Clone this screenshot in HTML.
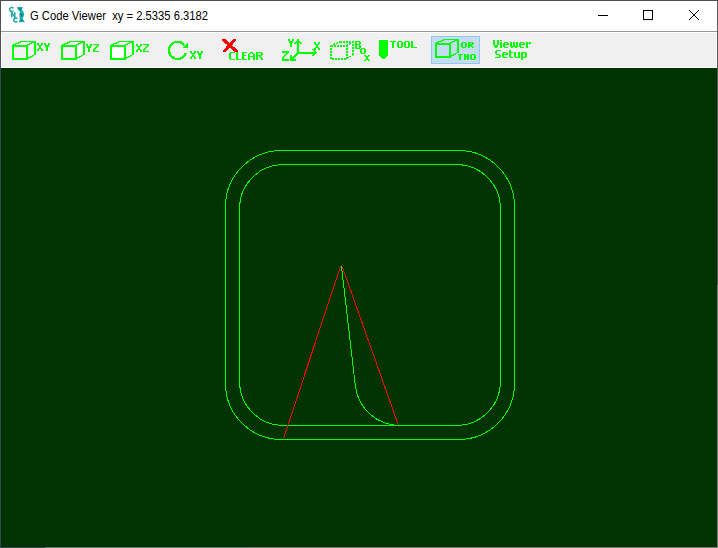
<!DOCTYPE html>
<html><head><meta charset="utf-8">
<style>
html,body{margin:0;padding:0;width:718px;height:548px;overflow:hidden;background:#fff;}
body{position:relative;font-family:"Liberation Sans",sans-serif;}
.abs{position:absolute;}
#title{left:1px;top:1px;width:716px;height:30px;background:#fff;}
#titleline{left:1px;top:31px;width:716px;height:1px;background:#999;}
#toolbar{left:1px;top:32px;width:716px;height:36px;background:#fff;}
#toolbg{left:2px;top:33px;width:714px;height:34px;background:#f0f0f0;}
#canvas{left:1px;top:68px;width:716px;height:479px;background:#003300;}
#ttext{left:30px;top:9px;font-size:12px;line-height:14px;color:#000;white-space:pre;transform:scaleX(0.936);transform-origin:0 0;}
svg{position:absolute;left:0;top:0;}
</style></head><body>
<div class="abs" id="title"></div>
<div class="abs" id="titleline"></div>
<div class="abs" id="toolbar"></div>
<div class="abs" id="toolbg"></div>
<div class="abs" id="canvas"></div>
<div class="abs" id="ttext">G Code Viewer  xy = 2.5335 6.3182</div>
<svg width="718" height="548" viewBox="0 0 718 548" shape-rendering="crispEdges">
  <!-- app icon -->
  <g shape-rendering="geometricPrecision" fill="none" stroke="#1fa5a5" stroke-width="1.5">
    <path d="M13.3 8.2 A2 2.1 0 1 0 13.3 10.8"/>
    <path d="M11.6 17.4 V12.4 L14.8 17.2 V12.2"/>
    <path d="M17.3 18.8 A2 2 0 1 0 17.3 21.2"/>
  </g>
  <g shape-rendering="geometricPrecision">
    <path d="M17 7 L22.8 7 L21.8 9.3 L23.2 11.3 L24.2 14 L23.6 16.6 L22.6 18.6 L25 22.2 L18.5 22.2 L19.8 19.6 L19.4 17 L19.4 14 L19.9 12 L17.4 9 Z" fill="#1fb4b4"/>
    <path d="M18 8 L22 7.8 L20.6 10.6 Z M20.2 12.5 L23.2 14.2 L22.2 17.6 L20.2 15.5 Z M19.8 20.5 L23.5 21.6 L21.6 19 Z" fill="#0f8888"/>
  </g>
  <!-- window controls -->
  <rect x="598" y="15" width="10" height="1" fill="#000"/>
  <rect x="643.5" y="10.5" width="9" height="9" fill="none" stroke="#000" stroke-width="1"/>
  <path d="M689 10 L699 20 M699 10 L689 20" stroke="#000" stroke-width="1" shape-rendering="geometricPrecision"/>
  <!-- drawing -->
  <g fill="none" stroke="#00ff00" stroke-width="1">
    <path d="M281.5 150.5 H458.5 A56 56 0 0 1 514.5 206.5 V383.5 A56 56 0 0 1 458.5 439.5 H281.5 A56 56 0 0 1 225.5 383.5 V206.5 A56 56 0 0 1 281.5 150.5 Z"/>
    <path d="M283.5 164.5 H456.5 A44 44 0 0 1 500.5 208.5 V381.5 A44 44 0 0 1 456.5 425.5 H283.5 A44 44 0 0 1 239.5 381.5 V208.5 A44 44 0 0 1 283.5 164.5 Z"/>
    <path d="M341.5 266.5 L355.3 385.6 A45 45 0 0 0 400 425.5"/>
  </g>
  <g fill="none" stroke="#ff0000" stroke-width="1">
    <path d="M340.5 266.5 L283.5 438.5"/>
    <path d="M342.5 267.5 L398.5 425.5"/>
  </g>
</svg>






<!--TB--><svg id="tb" width="718" height="548" viewBox="0 0 718 548" shape-rendering="crispEdges"><rect x="431.5" y="36.5" width="48" height="27" fill="#c4dcf2" stroke="#90c8f6"/><polygon points="13,46 22,42 35,42 27,46" fill="#fff"/><g fill="none" stroke="#00ff00" stroke-width="2"><rect x="13" y="46" width="14" height="13"/><line x1="35" y1="41" x2="35" y2="55"/></g><g fill="none" stroke="#00ff00" stroke-width="1.3"><line x1="21" y1="41.6" x2="35" y2="41.6"/><line x1="12.5" y1="45.5" x2="21.5" y2="41.5"/><line x1="26.5" y1="45.5" x2="34.5" y2="41.8"/><line x1="27" y1="58.8" x2="35" y2="54.5"/></g><polygon points="76,46 84,42 84,55 76,59" fill="#fff"/><g fill="none" stroke="#00ff00" stroke-width="2"><rect x="62" y="46" width="14" height="13"/><line x1="84" y1="41" x2="84" y2="55"/></g><g fill="none" stroke="#00ff00" stroke-width="1.3"><line x1="70" y1="41.6" x2="84" y2="41.6"/><line x1="61.5" y1="45.5" x2="70.5" y2="41.5"/><line x1="75.5" y1="45.5" x2="83.5" y2="41.8"/><line x1="76" y1="58.8" x2="84" y2="54.5"/></g><rect x="111" y="46" width="14" height="13" fill="#fff"/><g fill="none" stroke="#00ff00" stroke-width="2"><rect x="111" y="46" width="14" height="13"/><line x1="133" y1="41" x2="133" y2="55"/></g><g fill="none" stroke="#00ff00" stroke-width="1.3"><line x1="119" y1="41.6" x2="133" y2="41.6"/><line x1="110.5" y1="45.5" x2="119.5" y2="41.5"/><line x1="124.5" y1="45.5" x2="132.5" y2="41.8"/><line x1="125" y1="58.8" x2="133" y2="54.5"/></g><g fill="none" stroke="#00ff00" stroke-width="2"><rect x="436" y="44" width="14" height="13"/><line x1="458" y1="39" x2="458" y2="53"/></g><g fill="none" stroke="#00ff00" stroke-width="1.3"><line x1="444" y1="39.6" x2="458" y2="39.6"/><line x1="435.5" y1="43.5" x2="444.5" y2="39.5"/><line x1="449.5" y1="43.5" x2="457.5" y2="39.8"/><line x1="450" y1="56.8" x2="458" y2="52.5"/></g><g fill="none" stroke="#00ff00" stroke-width="2" stroke-dasharray="2 1"><rect x="331" y="46" width="16" height="13"/><polyline points="340,42 353,42 353,55"/></g><g fill="none" stroke="#00ff00" stroke-width="1.25" stroke-dasharray="2 1"><line x1="330.5" y1="45.8" x2="340" y2="41.8"/><line x1="346.5" y1="45.8" x2="352.5" y2="41.8"/><line x1="347" y1="58.8" x2="353" y2="54.5"/></g><path d="M184.6 45.3 A8.6 8.6 0 1 0 185.8 53" fill="none" stroke="#00ff00" stroke-width="2.2"/><polygon points="182,48 188,48 188,42" fill="#00ff00"/><g fill="#ff0000"><polygon points="222,39 225,39 238,50.5 238,52 235,52 222,40.5"/><polygon points="233,39 236,39 236,40.5 226,52 223,52 223,50.5"/></g><g fill="none" stroke="#00ff00" stroke-width="2"><line x1="298" y1="40" x2="298" y2="54"/></g><g fill="none" stroke="#00ff00" stroke-width="1.4"><polyline points="294.5,44 298,40 301.5,44"/><line x1="297" y1="53" x2="316" y2="53"/><polyline points="312,49 316,52.5 312,56"/></g><g fill="none" stroke="#00ff00" stroke-width="2"><line x1="298" y1="53" x2="291" y2="60"/><polyline points="291,55 291,60 296,60"/></g><polygon points="378,39 389,39 389,56 385.3,60.4 381.7,60.4 378,56" fill="#fff"/><polygon points="379,40 388,40 388,55.5 384.8,59.3 382.2,59.3 379,55.5" fill="#00ff00"/><g fill="#00ff00"><rect x="37" y="43" width="2" height="2"/><rect x="37" y="49" width="2" height="2"/><rect x="38" y="45" width="4" height="1"/><rect x="38" y="48" width="4" height="1"/><rect x="39" y="46" width="2" height="2"/><rect x="41" y="43" width="2" height="2"/><rect x="41" y="49" width="2" height="2"/><rect x="44" y="43" width="2" height="2"/><rect x="45" y="45" width="4" height="2"/><rect x="46" y="47" width="2" height="4"/><rect x="48" y="43" width="2" height="2"/><rect x="86" y="44" width="2" height="2"/><rect x="87" y="46" width="4" height="2"/><rect x="88" y="48" width="2" height="4"/><rect x="90" y="44" width="2" height="2"/><rect x="93" y="49" width="2" height="2"/><rect x="93" y="44" width="6" height="1"/><rect x="93" y="51" width="6" height="1"/><rect x="94" y="48" width="2" height="1"/><rect x="95" y="47" width="2" height="1"/><rect x="96" y="46" width="2" height="1"/><rect x="97" y="45" width="2" height="1"/><rect x="136" y="44" width="2" height="2"/><rect x="136" y="50" width="2" height="2"/><rect x="137" y="46" width="4" height="1"/><rect x="137" y="49" width="4" height="1"/><rect x="138" y="47" width="2" height="2"/><rect x="140" y="44" width="2" height="2"/><rect x="140" y="50" width="2" height="2"/><rect x="143" y="49" width="2" height="2"/><rect x="143" y="44" width="6" height="1"/><rect x="143" y="51" width="6" height="1"/><rect x="144" y="48" width="2" height="1"/><rect x="145" y="47" width="2" height="1"/><rect x="146" y="46" width="2" height="1"/><rect x="147" y="45" width="2" height="1"/><rect x="190" y="51" width="2" height="2"/><rect x="190" y="57" width="2" height="2"/><rect x="191" y="53" width="4" height="1"/><rect x="191" y="56" width="4" height="1"/><rect x="192" y="54" width="2" height="2"/><rect x="194" y="51" width="2" height="2"/><rect x="194" y="57" width="2" height="2"/><rect x="197" y="51" width="2" height="2"/><rect x="198" y="53" width="4" height="2"/><rect x="199" y="55" width="2" height="4"/><rect x="201" y="51" width="2" height="2"/><rect x="229" y="53" width="2" height="6"/><rect x="230" y="52" width="5" height="1"/><rect x="230" y="59" width="5" height="1"/><rect x="236" y="52" width="2" height="7"/><rect x="236" y="59" width="5" height="1"/><rect x="242" y="53" width="2" height="2"/><rect x="242" y="56" width="2" height="3"/><rect x="242" y="55" width="4" height="1"/><rect x="242" y="52" width="5" height="1"/><rect x="242" y="59" width="5" height="1"/><rect x="248" y="54" width="2" height="2"/><rect x="248" y="57" width="2" height="3"/><rect x="248" y="56" width="7" height="1"/><rect x="249" y="53" width="2" height="1"/><rect x="250" y="52" width="3" height="1"/><rect x="252" y="53" width="2" height="1"/><rect x="253" y="54" width="2" height="2"/><rect x="253" y="57" width="2" height="3"/><rect x="256" y="53" width="2" height="2"/><rect x="256" y="56" width="2" height="4"/><rect x="256" y="52" width="6" height="1"/><rect x="256" y="55" width="6" height="1"/><rect x="259" y="56" width="2" height="1"/><rect x="260" y="57" width="2" height="1"/><rect x="261" y="53" width="2" height="2"/><rect x="261" y="58" width="2" height="2"/><rect x="288" y="39" width="2" height="2"/><rect x="289" y="41" width="4" height="2"/><rect x="290" y="43" width="2" height="4"/><rect x="292" y="39" width="2" height="2"/><rect x="314" y="42" width="2" height="2"/><rect x="314" y="48" width="2" height="2"/><rect x="315" y="44" width="4" height="1"/><rect x="315" y="47" width="4" height="1"/><rect x="316" y="45" width="2" height="2"/><rect x="318" y="42" width="2" height="2"/><rect x="318" y="48" width="2" height="2"/><rect x="282" y="57" width="2" height="2"/><rect x="282" y="51" width="7" height="2"/><rect x="282" y="59" width="7" height="2"/><rect x="283" y="56" width="2" height="1"/><rect x="284" y="55" width="2" height="1"/><rect x="285" y="54" width="2" height="1"/><rect x="286" y="53" width="2" height="1"/><rect x="355" y="42" width="2" height="2"/><rect x="355" y="45" width="2" height="3"/><rect x="355" y="41" width="5" height="1"/><rect x="355" y="44" width="5" height="1"/><rect x="355" y="48" width="5" height="1"/><rect x="359" y="42" width="2" height="2"/><rect x="359" y="45" width="2" height="3"/><rect x="360" y="49" width="2" height="4"/><rect x="361" y="48" width="4" height="1"/><rect x="361" y="53" width="4" height="1"/><rect x="364" y="49" width="2" height="4"/><rect x="364" y="55" width="2" height="1"/><rect x="364" y="60" width="2" height="1"/><rect x="365" y="56" width="4" height="1"/><rect x="365" y="59" width="4" height="1"/><rect x="366" y="57" width="2" height="2"/><rect x="368" y="55" width="2" height="1"/><rect x="368" y="60" width="2" height="1"/><rect x="390" y="41" width="6" height="1"/><rect x="392" y="42" width="2" height="6"/><rect x="397" y="42" width="2" height="5"/><rect x="398" y="41" width="4" height="1"/><rect x="398" y="47" width="4" height="1"/><rect x="401" y="42" width="2" height="5"/><rect x="404" y="42" width="2" height="5"/><rect x="405" y="41" width="4" height="1"/><rect x="405" y="47" width="4" height="1"/><rect x="408" y="42" width="2" height="5"/><rect x="411" y="41" width="2" height="6"/><rect x="411" y="47" width="6" height="1"/><rect x="461" y="43" width="2" height="4"/><rect x="462" y="42" width="4" height="1"/><rect x="462" y="47" width="4" height="1"/><rect x="465" y="43" width="2" height="4"/><rect x="468" y="43" width="2" height="1"/><rect x="468" y="46" width="2" height="2"/><rect x="468" y="45" width="4" height="1"/><rect x="468" y="42" width="5" height="1"/><rect x="468" y="44" width="5" height="1"/><rect x="471" y="46" width="2" height="1"/><rect x="472" y="43" width="2" height="1"/><rect x="472" y="47" width="2" height="1"/><rect x="458" y="54" width="5" height="1"/><rect x="459" y="55" width="2" height="5"/><rect x="464" y="54" width="2" height="2"/><rect x="464" y="57" width="2" height="3"/><rect x="464" y="56" width="5" height="1"/><rect x="467" y="54" width="2" height="2"/><rect x="467" y="57" width="2" height="3"/><rect x="470" y="55" width="2" height="4"/><rect x="471" y="54" width="4" height="1"/><rect x="471" y="59" width="4" height="1"/><rect x="474" y="55" width="2" height="4"/><rect x="493" y="40" width="2" height="5"/><rect x="494" y="45" width="4" height="2"/><rect x="495" y="47" width="2" height="1"/><rect x="497" y="40" width="2" height="5"/><rect x="500" y="40" width="2" height="1"/><rect x="500" y="42" width="2" height="6"/><rect x="503" y="43" width="2" height="1"/><rect x="503" y="45" width="2" height="2"/><rect x="503" y="44" width="6" height="1"/><rect x="504" y="42" width="4" height="1"/><rect x="504" y="47" width="4" height="1"/><rect x="507" y="43" width="2" height="1"/><rect x="510" y="42" width="2" height="4"/><rect x="510" y="46" width="8" height="1"/><rect x="511" y="47" width="2" height="1"/><rect x="513" y="42" width="2" height="4"/><rect x="515" y="47" width="2" height="1"/><rect x="516" y="42" width="2" height="4"/><rect x="519" y="43" width="2" height="1"/><rect x="519" y="45" width="2" height="2"/><rect x="519" y="44" width="6" height="1"/><rect x="520" y="42" width="4" height="1"/><rect x="520" y="47" width="4" height="1"/><rect x="523" y="43" width="2" height="1"/><rect x="526" y="42" width="2" height="1"/><rect x="526" y="44" width="2" height="4"/><rect x="526" y="43" width="5" height="1"/><rect x="529" y="42" width="2" height="1"/><rect x="495" y="51" width="2" height="3"/><rect x="495" y="57" width="5" height="1"/><rect x="496" y="54" width="4" height="1"/><rect x="496" y="50" width="5" height="1"/><rect x="499" y="55" width="2" height="2"/><rect x="502" y="53" width="2" height="1"/><rect x="502" y="55" width="2" height="2"/><rect x="502" y="54" width="6" height="1"/><rect x="503" y="52" width="4" height="1"/><rect x="503" y="57" width="4" height="1"/><rect x="506" y="53" width="2" height="1"/><rect x="509" y="50" width="2" height="2"/><rect x="509" y="53" width="2" height="4"/><rect x="509" y="52" width="4" height="1"/><rect x="510" y="57" width="3" height="1"/><rect x="514" y="52" width="2" height="5"/><rect x="515" y="57" width="5" height="1"/><rect x="518" y="52" width="2" height="5"/><rect x="521" y="53" width="2" height="4"/><rect x="521" y="58" width="2" height="2"/><rect x="521" y="52" width="5" height="1"/><rect x="521" y="57" width="5" height="1"/><rect x="525" y="53" width="2" height="4"/></g></svg><!--/TB-->
<div class="abs" style="left:0;top:0;width:718px;height:1px;background:#4d4d4d"></div>
<div class="abs" style="left:0;top:1px;width:1px;height:67px;background:#505050"></div>
<div class="abs" style="left:0;top:68px;width:1px;height:480px;background:#33475a"></div>
<div class="abs" style="left:717px;top:1px;width:1px;height:284px;background:#565656"></div>
<div class="abs" style="left:717px;top:285px;width:1px;height:263px;background:#7a7a7e"></div>
<div class="abs" style="left:1px;top:547px;width:44px;height:1px;background:#33475a"></div>
<div class="abs" style="left:45px;top:547px;width:203px;height:1px;background:#6c7078"></div>
<div class="abs" style="left:248px;top:547px;width:470px;height:1px;background:#76767a"></div>
</body></html>
